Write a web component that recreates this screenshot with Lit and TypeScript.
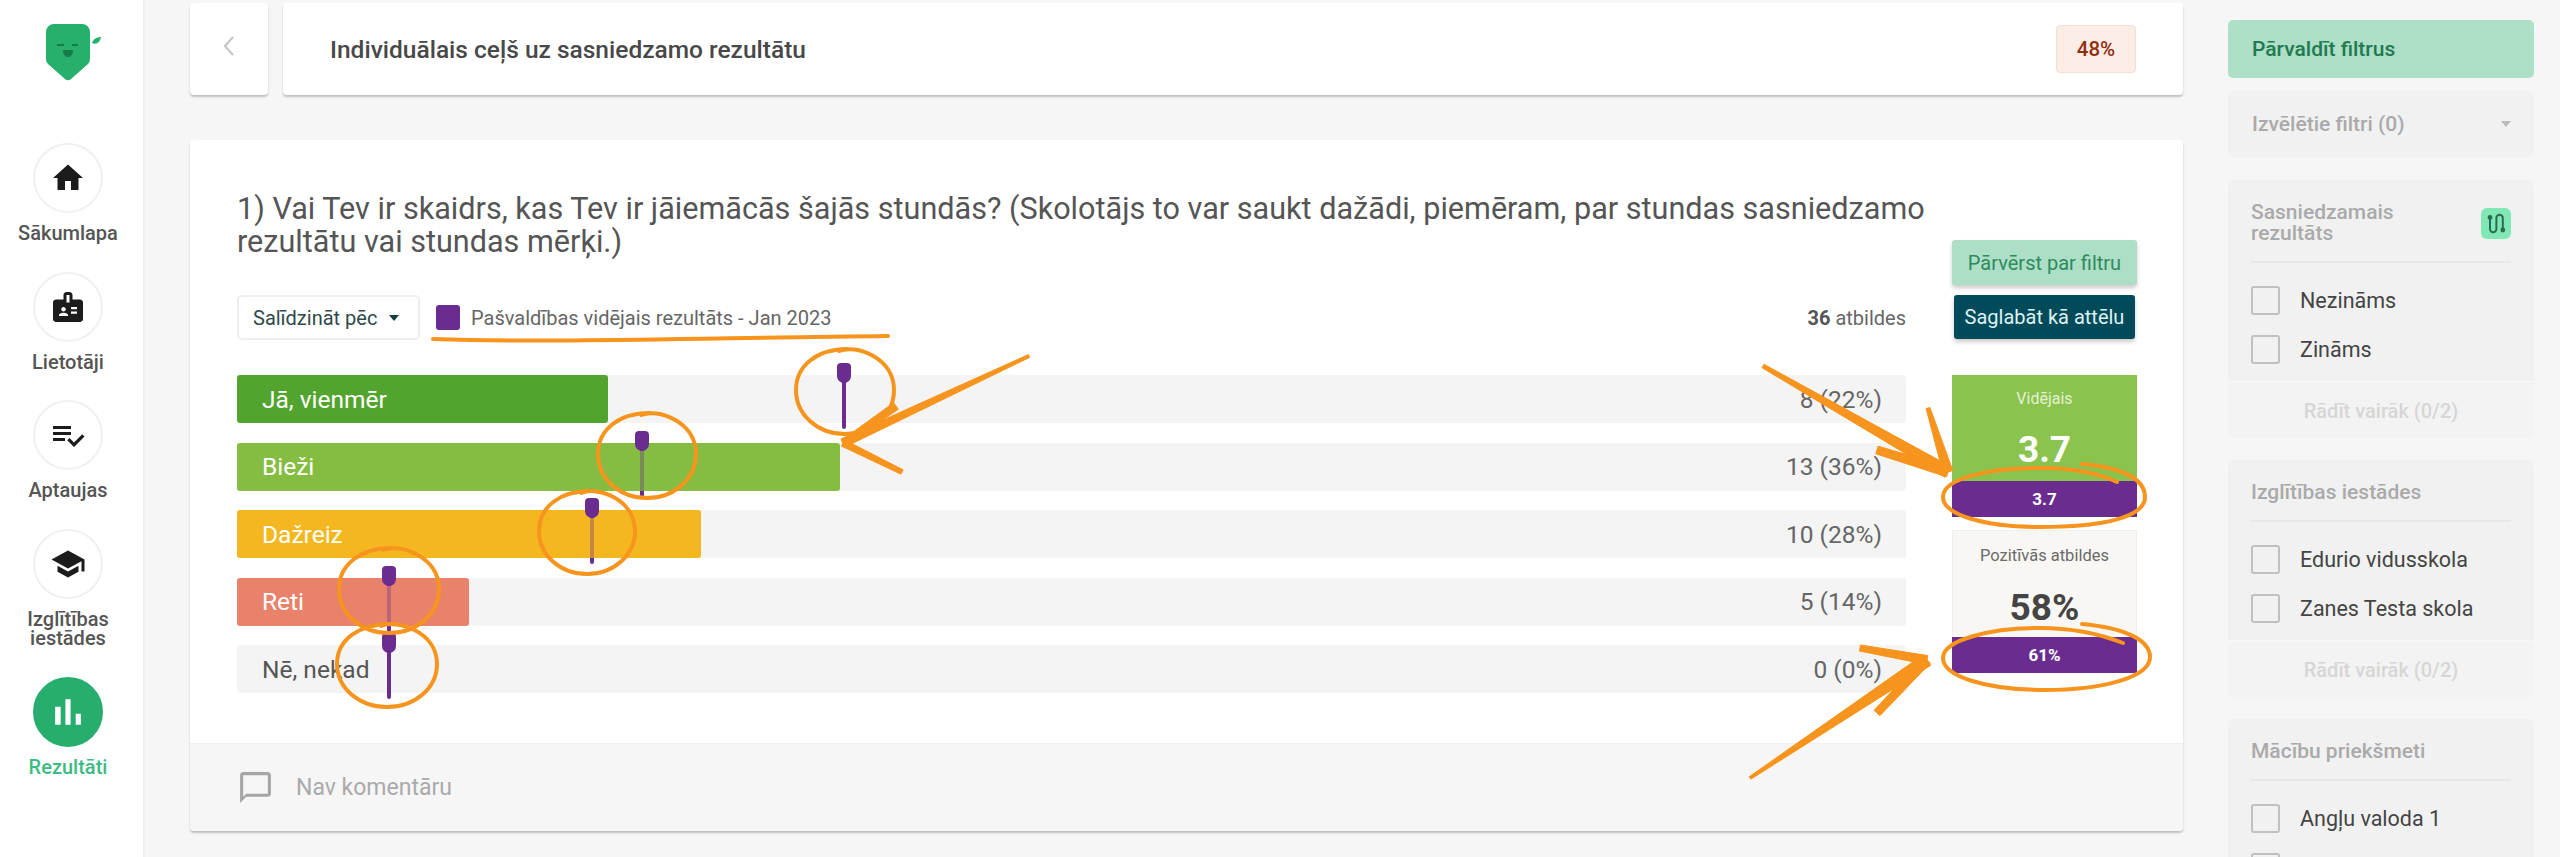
import { LitElement, html, css, svg } from 'lit';
import { customElement } from 'lit/decorators.js';

const ORANGE = '#f7941e';

const NAV = [
  { label: 'Sākumlapa', path: 'M10 20v-6h4v6h5v-8h3L12 3 2 12h3v8z' },
  { label: 'Lietotāji', path: 'M20 7h-5V4c0-1.1-.9-2-2-2h-2c-1.1 0-2 .9-2 2v3H4c-1.1 0-2 .9-2 2v11c0 1.1.9 2 2 2h16c1.1 0 2-.9 2-2V9c0-1.1-.9-2-2-2zM9 12c.83 0 1.5.67 1.5 1.5S9.83 15 9 15s-1.5-.67-1.5-1.5S8.17 12 9 12zm3 6H6v-.75c0-1 2-1.5 3-1.5s3 .5 3 1.5V18zm1-9h-2V4h2v5zm5 7.5h-4V15h4v1.5zm0-3h-4V12h4v1.5z' },
  { label: 'Aptaujas', path: 'M14 10H2v2h12v-2zm0-4H2v2h12V6zM2 16h8v-2H2v2zm19.5-4.5L23 13l-6.99 7-4.51-4.5L13 14l3.01 3 5.49-5.5z' },
  { label: 'Izglītības iestādes', path: 'M5 13.18v4L12 21l7-3.82v-4L12 17l-7-3.82zM12 3 1 9l11 6 9-4.91V17h2V9L12 3z' },
  { label: 'Rezultāti', path: 'M5 9.2h3V19H5zM10.6 5h2.8v14h-2.8zm5.6 8H19v6h-2.8z', active: true },
];

// marker = x of the purple pin relative to the row
const ROWS = [
  { label: 'Jā, vienmēr', count: '8 (22%)', pct: 22.2, color: '#53a42e', marker: 607 },
  { label: 'Bieži', count: '13 (36%)', pct: 36.1, color: '#84bd41', marker: 405 },
  { label: 'Dažreiz', count: '10 (28%)', pct: 27.8, color: '#f5b720', marker: 355 },
  { label: 'Reti', count: '5 (14%)', pct: 13.9, color: '#e9826a', marker: 152 },
  { label: 'Nē, nekad', count: '0 (0%)', pct: 0, color: '', marker: 152 },
];

const FILTERS = [
  { title: 'Sasniedzamais rezultāts', items: ['Nezināms', 'Zināms'], route: true, more: true },
  { title: 'Izglītības iestādes', items: ['Edurio vidusskola', 'Zanes Testa skola'], more: true },
  { title: 'Mācību priekšmeti', items: ['Angļu valoda 1', ''] },
];

function taper(x1: number, y1: number, x2: number, y2: number, w1: number, w2: number) {
  const len = Math.hypot(x2 - x1, y2 - y1);
  const nx = -(y2 - y1) / len;
  const ny = (x2 - x1) / len;
  const p = [
    [x1 + (nx * w1) / 2, y1 + (ny * w1) / 2],
    [x2 + (nx * w2) / 2, y2 + (ny * w2) / 2],
    [x2 - (nx * w2) / 2, y2 - (ny * w2) / 2],
    [x1 - (nx * w1) / 2, y1 - (ny * w1) / 2],
  ];
  return p.map((q) => q.map((v) => v.toFixed(1)).join(',')).join(' ');
}

function loop(cx: number, cy: number, rx: number, ry: number) {
  const k = 0.56;
  const top = cy - ry;
  return `M${cx - rx * 0.12} ${top + 5} C${cx + rx * 0.2} ${top - 2} ${cx + rx} ${cy - ry * 0.75} ${cx + rx} ${cy}
    C${cx + rx} ${cy + ry * k} ${cx + rx * k} ${cy + ry} ${cx} ${cy + ry}
    C${cx - rx * k} ${cy + ry} ${cx - rx} ${cy + ry * k} ${cx - rx} ${cy}
    C${cx - rx} ${cy - ry * k} ${cx - rx * k} ${top + 3} ${cx + rx * 0.05} ${top + 3}`;
}

const SHAFTS = [
  [1029, 356, 843, 443, 3, 9], [843, 443, 896, 406, 6, 8], [843, 443, 902, 472, 7, 5],
  [1763, 366, 1948, 472, 4, 12], [1948, 472, 1928, 408, 10, 4], [1948, 472, 1877, 450, 10, 8],
  [1750, 778, 1927, 660, 3, 13], [1927, 660, 1860, 648, 9, 6], [1927, 660, 1877, 713, 9, 8],
];

const LOOPS = [
  loop(845, 390, 49, 44), loop(647, 454, 49, 44), loop(587, 531, 48, 43),
  loop(389, 589, 50, 44), loop(387, 664, 50, 43),
  'M2082 464C2125 468 2145 480 2145 497C2145 518 2100 527 2040 527C1985 527 1943 515 1943 497C1943 478 1990 468 2040 468C2075 468 2100 474 2117 482',
  'M2082 624C2125 628 2150 640 2150 657C2150 678 2100 690 2045 690C1985 690 1943 676 1943 658C1943 640 1990 628 2040 628C2075 628 2100 634 2123 643',
  'M433 339C560 343 700 338 888 336',
];

@customElement('app-root')
export class AppRoot extends LitElement {
  static styles = css`
    :host {
      display: block;
      font-family: Roboto, 'Liberation Sans', sans-serif;
    }
    .page {
      position: relative;
      display: grid;
      grid-template-columns: 145px 1fr 377px;
      height: 857px;
      overflow: hidden;
      background: #f6f6f6;
      color: #555;
    }

    .side {
      display: flex;
      flex-direction: column;
      align-items: center;
      padding-right: 7px;
      background: #fff;
      border-right: 2px solid #efefef;
      box-sizing: border-box;
    }
    .logo {
      width: 62px;
      height: 60px;
      margin: 22px 0 61px 18px;
      flex: none;
    }
    .nav {
      display: flex;
      flex-direction: column;
      align-items: center;
      gap: 28px;
    }
    .nav-item {
      display: flex;
      flex-direction: column;
      align-items: center;
      gap: 11px;
      width: 110px;
    }
    .circle {
      display: flex;
      align-items: center;
      justify-content: center;
      width: 70px;
      height: 70px;
      box-sizing: border-box;
      border: 2px solid #f0f0f0;
      border-radius: 50%;
      color: #1c1c1c;
    }
    .circle svg {
      width: 36px;
      height: 36px;
      fill: currentColor;
    }
    .nav-label {
      font-size: 20px;
      line-height: 19.5px;
      font-weight: 500;
      text-align: center;
      color: #555;
      width: 104px;
    }
    .active .circle {
      background: #27ae6f;
      border-color: #27ae6f;
      color: #fff;
    }
    .active .circle svg {
      width: 44px;
      height: 44px;
    }
    .active .nav-label {
      color: #3dbb85;
    }

    .main {
      padding: 3px 0 0 45px;
      display: flex;
      flex-direction: column;
      gap: 45px;
    }
    .topbar {
      display: flex;
      gap: 15px;
      height: 92px;
    }
    .back,
    .title-card,
    .card {
      background: #fff;
      border-radius: 4px;
      box-shadow: 0 2px 2px rgba(0, 0, 0, 0.22);
    }
    .back {
      width: 78px;
      display: flex;
      align-items: center;
      justify-content: center;
    }
    .back svg {
      width: 16px;
      height: 24px;
      margin-bottom: 6px;
    }
    .title-card {
      flex: 1;
      display: flex;
      align-items: center;
      justify-content: space-between;
      padding: 0 47px;
      font-size: 24.5px;
      font-weight: 500;
      color: #484848;
    }
    .badge {
      display: flex;
      align-items: center;
      justify-content: center;
      width: 80px;
      height: 48px;
      box-sizing: border-box;
      background: #fbece5;
      border: 1px solid #f4dfd5;
      border-radius: 4px;
      color: #922e10;
      font-size: 20.5px;
    }

    .body {
      display: grid;
      grid-template-columns: 1715px 185px;
      padding: 52px 46px 50px 47px;
    }
    .question {
      margin: 0 0 37px;
      font-size: 30.6px;
      line-height: 33px;
      font-weight: 400;
      color: #555;
    }
    .head {
      display: flex;
      align-items: center;
      height: 45px;
      margin: 0 46px 35px 0;
    }
    .compare {
      display: flex;
      align-items: center;
      gap: 12px;
      box-sizing: border-box;
      width: 183px;
      height: 45px;
      padding-left: 14px;
      background: #fff;
      border: 2px solid #eee;
      border-radius: 5px;
      color: #2e4a4a;
      font-size: 20px;
    }
    .caret {
      width: 0;
      height: 0;
      border: 5.5px solid transparent;
      border-top: 6px solid #123c3c;
      border-bottom: 0;
    }
    .swatch {
      width: 24px;
      height: 25px;
      margin: 0 11px 0 16px;
      border-radius: 3px;
      background: #6a2d8f;
    }
    .legend {
      flex: 1;
      font-size: 20px;
      color: #666;
    }
    .total {
      font-size: 20px;
      color: #666;
    }
    .total b {
      font-weight: 700;
      color: #555;
    }

    .rows {
      display: flex;
      flex-direction: column;
      gap: 19.5px;
      margin-right: 46px;
    }
    .row {
      position: relative;
      display: flex;
      align-items: center;
      justify-content: space-between;
      height: 48px;
      padding: 0 24px 0 25px;
      background: #f4f4f4;
      border-radius: 3px;
      font-size: 24.5px;
      color: #555;
    }
    .fill {
      position: absolute;
      inset: 0 auto 0 0;
      border-radius: 3px;
    }
    .row-label,
    .row-count {
      position: relative;
    }
    .row-count {
      color: #666;
    }
    .on-fill {
      color: #fff;
    }
    .pin {
      position: absolute;
      top: -12px;
      bottom: -6px;
      width: 4px;
      margin-left: -2px;
      background: #6a2d8f;
      border-radius: 2px;
    }
    .pin::before {
      content: '';
      position: absolute;
      top: 0;
      left: -5px;
      width: 14px;
      height: 20px;
      background: #6a2d8f;
      border-radius: 4px 4px 7px 7px;
    }
    .veil {
      position: absolute;
      top: 20px;
      left: 0;
      width: 4px;
      height: 40px;
      opacity: 0.65;
    }

    .tools {
      display: flex;
      flex-direction: column;
      margin-top: 48px;
    }
    .btn {
      display: flex;
      align-items: center;
      justify-content: center;
      border-radius: 3px;
      font-size: 20px;
      box-shadow: 0 3px 4px rgba(0, 0, 0, 0.2);
    }
    .btn.mint {
      height: 45px;
      background: #acdfc6;
      color: #2f8a5f;
    }
    .btn.dark {
      height: 44px;
      margin: 10px 2px 36px;
      background: #004a59;
      color: #dff1f2;
    }
    .stat {
      display: flex;
      flex-direction: column;
      box-sizing: border-box;
      height: 142px;
    }
    .stat.good {
      background: #8bc34f;
      color: #fff;
    }
    .stat.plain {
      height: 143px;
      margin-top: 13px;
      background: #f8f7f4;
      box-shadow: inset 0 0 0 1px #efefec;
      color: #444;
    }
    .stat-top {
      flex: 1;
      display: flex;
      flex-direction: column;
      align-items: center;
      padding-top: 15px;
    }
    .plain .stat-top {
      padding-top: 17px;
    }
    .stat-name {
      font-size: 16px;
      line-height: 18px;
      color: #e4f2d2;
    }
    .plain .stat-name {
      font-size: 16.5px;
      color: #6a6a6a;
    }
    .stat-value {
      margin-top: 20px;
      font-size: 37px;
      line-height: 44px;
      font-weight: 700;
    }
    .plain .stat-value {
      margin-top: 21px;
    }
    .stat-compare {
      display: flex;
      align-items: center;
      justify-content: center;
      height: 36px;
      background: #6a2d8f;
      color: #fff;
      font-size: 17px;
      font-weight: 700;
    }

    .foot {
      display: flex;
      align-items: center;
      gap: 22px;
      height: 88px;
      padding-left: 47px;
      background: #f6f6f6;
      border-top: 1px solid #efefef;
      box-sizing: border-box;
      border-radius: 0 0 4px 4px;
      color: #aaa;
      font-size: 23px;
    }
    .foot svg {
      width: 37px;
      height: 37px;
      fill: #a5a5a5;
    }

    .filters {
      display: flex;
      flex-direction: column;
      padding: 20px 26px 0 45px;
      font-size: 21px;
    }
    .manage {
      display: flex;
      align-items: center;
      flex: none;
      height: 58px;
      padding-left: 24px;
      background: #aedfc7;
      border-radius: 5px;
      color: #217a50;
      font-weight: 500;
    }
    .chosen {
      display: flex;
      align-items: center;
      justify-content: space-between;
      flex: none;
      height: 66px;
      margin: 13px 0 23px;
      padding: 0 23px 0 24px;
      background: #f1f1f1;
      border-radius: 5px;
      color: #aaa;
      font-weight: 500;
    }
    .chosen .caret {
      border-top-color: #bbb;
    }
    .panel {
      flex: none;
      margin-bottom: 22px;
      background: #f1f1f1;
      border-radius: 5px;
    }
    .panel-body {
      padding: 22px 23px 17px;
    }
    .panel-head {
      display: flex;
      align-items: center;
      justify-content: space-between;
      padding-bottom: 17px;
      border-bottom: 2px solid #e8e8e8;
      color: #aaa;
      font-weight: 500;
      line-height: 21px;
    }
    .panel-title {
      width: 165px;
    }
    .panel-title.wide {
      width: auto;
    }
    .route {
      display: flex;
      width: 30px;
      height: 31px;
      background: #7fe8b5;
      border-radius: 6px;
    }
    .checks {
      display: flex;
      flex-direction: column;
      gap: 20px;
      margin-top: 23px;
    }
    .check {
      display: flex;
      align-items: center;
      gap: 20px;
      height: 29px;
      color: #444;
      font-size: 21.5px;
    }
    .box {
      width: 29px;
      height: 29px;
      box-sizing: border-box;
      border: 2px solid #c0c0c0;
      border-radius: 3px;
    }
    .more {
      display: flex;
      align-items: center;
      justify-content: center;
      height: 57px;
      background: #f3f3f3;
      border-top: 2px solid #f6f6f6;
      box-sizing: border-box;
      border-radius: 0 0 5px 5px;
      color: #d6d6d6;
      font-size: 20px;
      font-weight: 500;
    }

    .marks {
      position: absolute;
      inset: 0;
      width: 2560px;
      height: 857px;
      pointer-events: none;
    }
  `;

  private renderNav() {
    return NAV.map(
      (n) => html`
        <div class="nav-item ${n.active ? 'active' : ''}">
          <div class="circle">
            <svg viewBox="0 0 24 24"><path d=${n.path}></path></svg>
          </div>
          <div class="nav-label">${n.label}</div>
        </div>
      `,
    );
  }

  private renderRow(r: (typeof ROWS)[number]) {
    const covered = r.pct > 0 && r.marker < (r.pct / 100) * 1669;
    return html`
      <div class="row">
        ${r.pct > 0
          ? html`<div class="fill" style="width:${r.pct}%;background:${r.color}"></div>`
          : ''}
        <span class="row-label ${r.pct > 0 ? 'on-fill' : ''}">${r.label}</span>
        <span class="row-count">${r.count}</span>
        <div class="pin" style="left:${r.marker}px">
          ${covered ? html`<div class="veil" style="background:${r.color}"></div>` : ''}
        </div>
      </div>
    `;
  }

  private renderPanel(f: (typeof FILTERS)[number]) {
    return html`
      <div class="panel">
        <div class="panel-body">
          <div class="panel-head">
            <span class="panel-title ${f.route ? '' : 'wide'}">${f.title}</span>
            ${f.route
              ? html`<span class="route">
                  <svg viewBox="0 0 30 31" fill="none" stroke="#2d6b50" stroke-width="2">
                    <path d="M9 10v11a3.2 3.2 0 0 0 6.4 0V10a3.2 3.2 0 0 1 6.4 0v11"></path>
                    <circle cx="9" cy="9.5" r="2.4" fill="#2d6b50" stroke="none"></circle>
                    <circle cx="21.8" cy="22" r="2.4" fill="#2d6b50" stroke="none"></circle>
                  </svg>
                </span>`
              : ''}
          </div>
          <div class="checks">
            ${f.items.map(
              (i) => html`<div class="check"><span class="box"></span>${i}</div>`,
            )}
          </div>
        </div>
        ${f.more ? html`<div class="more">Rādīt vairāk (0/2)</div>` : ''}
      </div>
    `;
  }

  render() {
    return html`
      <div class="page">
        <nav class="side">
          <svg class="logo" viewBox="0 0 62 60">
            <path
              d="M8 2h28a8 8 0 0 1 8 8v27a7 7 0 0 1-2 5L25 57a4 4 0 0 1-6 0L2 42a7 7 0 0 1-2-5V10a8 8 0 0 1 8-8z"
              fill="#26b06c"
            ></path>
            <path d="M46 21c1-4 5-6 9-6-1 5-4 8-9 6z" fill="#26b06c"></path>
            <path d="M11 23h7M26 23h6" stroke="#147a48" stroke-width="2"></path>
            <path d="M17 28h10c0 4-2 7-5 7s-5-3-5-7z" fill="#147a48"></path>
          </svg>
          <div class="nav">${this.renderNav()}</div>
        </nav>

        <main class="main">
          <div class="topbar">
            <div class="back">
              <svg viewBox="0 0 16 24" fill="none" stroke="#c4c4c4" stroke-width="2">
                <path d="M12 3 4 12l8 9"></path>
              </svg>
            </div>
            <div class="title-card">
              <span>Individuālais ceļš uz sasniedzamo rezultātu</span>
              <span class="badge">48%</span>
            </div>
          </div>

          <section class="card">
            <div class="body">
              <div>
                <h2 class="question">
                  1) Vai Tev ir skaidrs, kas Tev ir jāiemācās šajās stundās? (Skolotājs to var saukt
                  dažādi, piemēram, par stundas sasniedzamo rezultātu vai stundas mērķi.)
                </h2>
                <div class="head">
                  <div class="compare">Salīdzināt pēc <span class="caret"></span></div>
                  <span class="swatch"></span>
                  <span class="legend">Pašvaldības vidējais rezultāts - Jan 2023</span>
                  <span class="total"><b>36</b> atbildes</span>
                </div>
                <div class="rows">${ROWS.map((r) => this.renderRow(r))}</div>
              </div>
              <div class="tools">
                <div class="btn mint">Pārvērst par filtru</div>
                <div class="btn dark">Saglabāt kā attēlu</div>
                <div class="stat good">
                  <div class="stat-top">
                    <span class="stat-name">Vidējais</span>
                    <span class="stat-value">3.7</span>
                  </div>
                  <div class="stat-compare">3.7</div>
                </div>
                <div class="stat plain">
                  <div class="stat-top">
                    <span class="stat-name">Pozitīvās atbildes</span>
                    <span class="stat-value">58%</span>
                  </div>
                  <div class="stat-compare">61%</div>
                </div>
              </div>
            </div>
            <div class="foot">
              <svg viewBox="0 0 24 24">
                <path d="M20 2H4c-1.1 0-2 .9-2 2v18l4-4h14c1.1 0 2-.9 2-2V4c0-1.1-.9-2-2-2zm0 14H6l-2 2V4h16v12z"></path>
              </svg>
              Nav komentāru
            </div>
          </section>
        </main>

        <aside class="filters">
          <div class="manage">Pārvaldīt filtrus</div>
          <div class="chosen">Izvēlētie filtri (0) <span class="caret"></span></div>
          ${FILTERS.map((f) => this.renderPanel(f))}
        </aside>

        <svg class="marks" viewBox="0 0 2560 857">
          ${LOOPS.map(
            (d) => svg`<path d=${d} fill="none" stroke=${ORANGE} stroke-width="4" stroke-linecap="round"></path>`,
          )}
          ${SHAFTS.map(
            (s) => svg`<polygon points=${taper(s[0], s[1], s[2], s[3], s[4], s[5])} fill=${ORANGE} stroke=${ORANGE} stroke-width="1" stroke-linejoin="round"></polygon>`,
          )}
        </svg>
      </div>
    `;
  }
}
